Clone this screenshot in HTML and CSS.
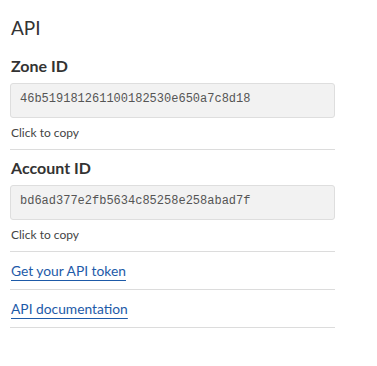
FILE: index.html
```html
<!DOCTYPE html>
<html lang="en">
<head>
    <meta charset="UTF-8">
    <meta name="viewport" content="width=device-width, initial-scale=1.0">
    <title>API</title>
    <link rel="stylesheet" href="styles.css">
</head>
<body>
    <div class="api-panel">
        <h1 class="api-title">API</h1>

        <div class="id-group">
            <h2 class="id-label">Zone ID</h2>
            <div class="id-box">46b519181261100182530e650a7c8d18</div>
            <div class="copy-hint">Click to copy</div>
        </div>

        <div class="id-group">
            <h2 class="id-label">Account ID</h2>
            <div class="id-box">bd6ad377e2fb5634c85258e258abad7f</div>
            <div class="copy-hint">Click to copy</div>
        </div>

        <div class="link-row">
            <a href="#">Get your API token</a>
        </div>
        <div class="link-row">
            <a href="#">API documentation</a>
        </div>
    </div>
</body>
</html>
```

FILE: styles.css
```css
* {
    margin: 0;
    padding: 0;
    box-sizing: border-box;
}

body {
    font-family: 'Lato', 'Open Sans', sans-serif;
    background: #fff;
    color: #333;
}

.api-panel {
    width: 325px;
    margin-left: 10px;
    padding-top: 16px;
}

.api-title {
    font-size: 19px;
    line-height: 24px;
    font-weight: 400;
    color: #333;
    margin-left: 1px;
    margin-bottom: 8px;
}

.id-group {
    padding-top: 8px;
    padding-bottom: 8px;
    border-bottom: 1px solid #dcdcdc;
}

.id-label {
    font-size: 16px;
    line-height: 20px;
    font-weight: 700;
    color: #333;
    margin-left: 1px;
}

.id-box {
    margin-top: 7px;
    background: #f2f2f2;
    border: 1px solid #dedede;
    border-radius: 3px;
    padding: 7px 9px 9px;
    font-family: 'Liberation Mono', monospace;
    font-size: 12px;
    line-height: 17px;
    color: #555;
    cursor: pointer;
}

.copy-hint {
    margin-top: 7px;
    margin-left: 1px;
    font-size: 12px;
    line-height: 16px;
    color: #444;
}

.link-row {
    padding: 10px 0 9px 1px;
    border-bottom: 1px solid #dcdcdc;
    font-size: 13.8px;
    line-height: 18px;
}

.link-row a {
    color: #1d5aa8;
    text-decoration: underline;
    text-decoration-thickness: 1px;
    text-underline-offset: 4px;
}
```
